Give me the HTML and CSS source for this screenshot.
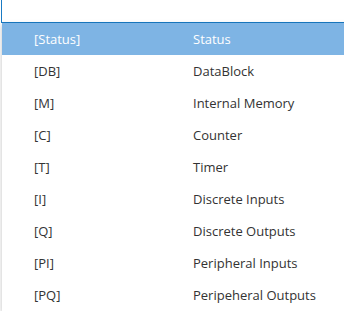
FILE: index.html
```html
<!DOCTYPE html>
<html lang="en">
<head>
    <meta charset="UTF-8">
    <title>Address Area Picker</title>
    <link rel="stylesheet" href="styles.css">
</head>
<body>
    <div class="picker">
        <!-- Input field (scrolled partly out of view) -->
        <div class="field"></div>

        <!-- Dropdown list -->
        <div class="dropdown">
            <div class="row header">
                <span class="code">[Status]</span>
                <span class="name">Status</span>
            </div>
            <div class="row"><span class="code">[DB]</span><span class="name">DataBlock</span></div>
            <div class="row"><span class="code">[M]</span><span class="name">Internal Memory</span></div>
            <div class="row"><span class="code">[C]</span><span class="name">Counter</span></div>
            <div class="row"><span class="code">[T]</span><span class="name">Timer</span></div>
            <div class="row"><span class="code">[I]</span><span class="name">Discrete Inputs</span></div>
            <div class="row"><span class="code">[Q]</span><span class="name">Discrete Outputs</span></div>
            <div class="row"><span class="code">[PI]</span><span class="name">Peripheral Inputs</span></div>
            <div class="row"><span class="code">[PQ]</span><span class="name">Peripeheral Outputs</span></div>
        </div>
    </div>
</body>
</html>
```

FILE: styles.css
```css
body {
    margin: 0;
    background-color: #ffffff;
    font-family: "Open Sans", "Liberation Sans", sans-serif;
    font-size: 13px;
    color: #333333;
    overflow: hidden;
}
.picker {
    width: 360px;
}
.field {
    height: 22px;
    margin-left: 1px;
    border-left: 1px solid #1a7bc4;
    border-bottom: 1px solid #1a7bc4;
    background-color: #ffffff;
}
.dropdown {
    margin-left: 2px;
    background-color: #ffffff;
    box-shadow: 0 2px 5px rgba(0, 0, 0, 0.25);
}
.row {
    display: grid;
    grid-template-columns: 159px 1fr;
    height: 32px;
    align-items: center;
    padding-left: 32px;
}
.row.header {
    background-color: #7eb4e4;
    color: #ffffff;
}
```
